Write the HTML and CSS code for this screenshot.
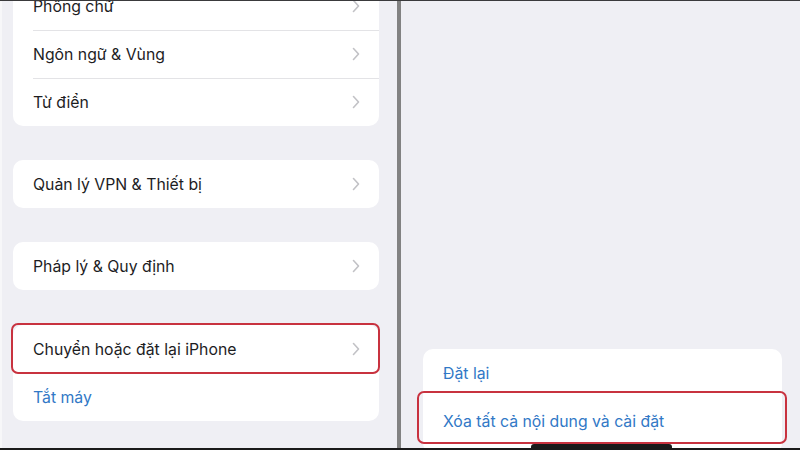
FILE: index.html
```html
<!DOCTYPE html>
<html lang="vi">
<head>
    <meta charset="UTF-8">
    <title>Cài đặt chung</title>
    <link rel="stylesheet" href="styles.css">
</head>
<body>
    <div class="screen">
        <div class="panel left">
            <div class="group first">
                <div class="row">
                    <span>Phông chữ</span>
                    <svg class="chev" width="8" height="14" viewBox="0 0 8 14"><path d="M1.5 1.5l5 5.5-5 5.5"/></svg>
                </div>
                <div class="row">
                    <span>Ngôn ngữ &amp; Vùng</span>
                    <svg class="chev" width="8" height="14" viewBox="0 0 8 14"><path d="M1.5 1.5l5 5.5-5 5.5"/></svg>
                </div>
                <div class="row">
                    <span>Từ điển</span>
                    <svg class="chev" width="8" height="14" viewBox="0 0 8 14"><path d="M1.5 1.5l5 5.5-5 5.5"/></svg>
                </div>
            </div>

            <div class="group">
                <div class="row">
                    <span>Quản lý VPN &amp; Thiết bị</span>
                    <svg class="chev" width="8" height="14" viewBox="0 0 8 14"><path d="M1.5 1.5l5 5.5-5 5.5"/></svg>
                </div>
            </div>

            <div class="group">
                <div class="row">
                    <span>Pháp lý &amp; Quy định</span>
                    <svg class="chev" width="8" height="14" viewBox="0 0 8 14"><path d="M1.5 1.5l5 5.5-5 5.5"/></svg>
                </div>
            </div>

            <div class="group">
                <div class="row marked mark-left">
                    <span>Chuyển hoặc đặt lại iPhone</span>
                    <svg class="chev" width="8" height="14" viewBox="0 0 8 14"><path d="M1.5 1.5l5 5.5-5 5.5"/></svg>
                </div>
                <div class="row blue">
                    <span>Tắt máy</span>
                </div>
            </div>
        </div>

        <div class="divider"></div>

        <div class="panel right">
            <div class="group sheet">
                <div class="row blue">
                    <span>Đặt lại</span>
                </div>
                <div class="row blue marked mark-right">
                    <span>Xóa tất cả nội dung và cài đặt</span>
                </div>
            </div>
            <div class="home-bar"></div>
        </div>
    </div>
</body>
</html>
```

FILE: styles.css
```css
* {
    box-sizing: border-box;
}
body {
    margin: 0;
    font-family: Inter, "Noto Sans", sans-serif;
    background: #efeff4;
}
.screen {
    display: flex;
    width: 800px;
    height: 450px;
    overflow: hidden;
    border-top: 1px solid #3a3a3c;
    border-bottom: 2px solid #1a1a1a;
}
.panel {
    background: #efeff4;
    position: relative;
}
.left {
    width: 397px;
    padding: 0 18px 0 11px;
    border-left: 2px solid #f7f7f9;
}
.left .group {
    margin-top: 34px;
}
.left .group.first {
    margin-top: -19px;
}
.left .group:last-child {
    margin-top: 35px;
}
.divider {
    width: 4px;
    background: #828282;
}
.right {
    flex: 1;
    display: flex;
    flex-direction: column;
    justify-content: flex-end;
    padding: 0 18px 0 22px;
}
.group {
    background: #ffffff;
    border-radius: 10px;
}
.sheet {
    margin-bottom: -5px;
    padding-bottom: 8px;
}
.row {
    position: relative;
    height: 48px;
    display: flex;
    align-items: center;
    justify-content: space-between;
    padding: 0 20px 0 20px;
    font-size: 15.8px;
    color: #1d1d1f;
}
.row + .row::before {
    content: "";
    position: absolute;
    top: 0;
    left: 20px;
    right: 0;
    border-top: 1px solid #e3e3e6;
}
.marked + .row::before,
.row.marked::before {
    display: none;
}
.blue {
    color: #3178c6;
}
.chev {
    fill: none;
    stroke: #c2c2c6;
    stroke-width: 1.6;
    stroke-linecap: round;
    stroke-linejoin: round;
    margin-right: -1px;
}
.marked::after {
    content: "";
    position: absolute;
    border: 2px solid #c8323f;
    border-radius: 7px;
}
.mark-left::after {
    top: -2px;
    left: -2px;
    right: -1px;
    bottom: -1px;
}
.mark-right::after {
    top: -6px;
    left: -6px;
    right: -5px;
    bottom: 1px;
}
.home-bar {
    position: absolute;
    left: 130px;
    bottom: 0;
    width: 141px;
    height: 4px;
    border-radius: 3px 3px 0 0;
    background: #1a1a1a;
}
```
